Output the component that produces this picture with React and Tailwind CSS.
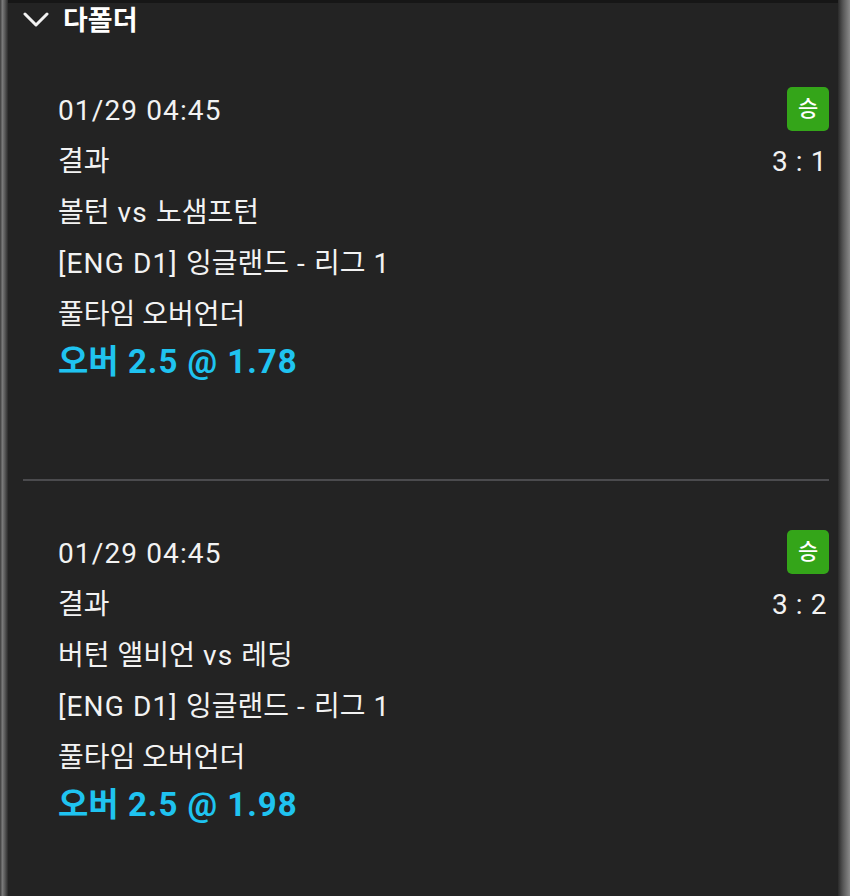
import React from "react";

const bets = [
  {
    date: "01/29 04:45",
    score: "3 : 1",
    match: "볼턴 vs 노샘프턴",
    league: "[ENG D1] 잉글랜드 - 리그 1",
    market: "풀타임 오버언더",
    pick: "오버 2.5 @ 1.78",
  },
  {
    date: "01/29 04:45",
    score: "3 : 2",
    match: "버턴 앨비언 vs 레딩",
    league: "[ENG D1] 잉글랜드 - 리그 1",
    market: "풀타임 오버언더",
    pick: "오버 2.5 @ 1.98",
  },
];

// latin runs in the source are set a bit looser than Roboto here
function Txt({ children, wide = "tracking-[0.04em]" }) {
  const parts = String(children).split(/([가-힣]+)/);
  return (
    <>
      {parts.map((p, i) =>
        /[가-힣]/.test(p) ? (
          <span key={i}>{p}</span>
        ) : (
          <span key={i} className={wide}>
            {p}
          </span>
        )
      )}
    </>
  );
}

function BetCard({ bet }) {
  return (
    <div className="pl-[35px] text-[28px] leading-[51px] text-[#f2f2f2]">
      <div className="flex items-center justify-between h-[51px]">
        <span>
          <Txt>{bet.date}</Txt>
        </span>
        <span className="w-[42px] h-[44px] rounded-[5px] bg-[#34a519] text-white text-[22px] font-medium flex items-center justify-center mt-[-4px]">
          승
        </span>
      </div>
      <div className="flex items-center justify-between h-[51px]">
        <span>결과</span>
        <span className="mr-[2px] tracking-[0.02em]">{bet.score}</span>
      </div>
      <div className="h-[51px]">
        <Txt>{bet.match}</Txt>
      </div>
      <div className="h-[51px]">
        <Txt>{bet.league}</Txt>
      </div>
      <div className="h-[50px]">{bet.market}</div>
      <div className="h-[51px] mt-[-3px] text-[33px] font-bold text-[#1fc3f0]">
        <Txt wide="tracking-[0.03em]">{bet.pick}</Txt>
      </div>
    </div>
  );
}

export default function App() {
  return (
    <div
      className="w-[850px] h-[896px] flex bg-[#232323] overflow-hidden"
      style={{ fontFamily: 'Roboto, "Noto Sans CJK KR", sans-serif' }}
    >
      <div className="w-[8px] h-full bg-[linear-gradient(to_right,#3a3a3a,#7a7a7a_30%,#5a5a5a_60%,#2a2a2a)]" />
      <div className="flex-1 flex flex-col">
        <div className="h-[3px] bg-[#161616]" />
        <div className="h-[36px] flex items-center pl-[15px] gap-[14px] text-white">
          <svg width="26" height="16" viewBox="0 0 26 16" className="mt-[-2px]">
            <polyline
              points="2,2 13,13 24,2"
              fill="none"
              stroke="#f2f2f2"
              strokeWidth="3"
              strokeLinecap="round"
              strokeLinejoin="round"
            />
          </svg>
          <span className="text-[27px] font-bold">다폴더</span>
        </div>
        <div className="pl-[15px] pr-[9px] pt-[46px]">
          <BetCard bet={bets[0]} />
          <div className="mt-[92px] mb-[47px] h-[2px] bg-[#4b4b4e]" />
          <BetCard bet={bets[1]} />
        </div>
      </div>
      <div className="w-[12px] h-full bg-[linear-gradient(to_right,#2a2a2a,#555555_40%,#8a8a8a)]" />
    </div>
  );
}
